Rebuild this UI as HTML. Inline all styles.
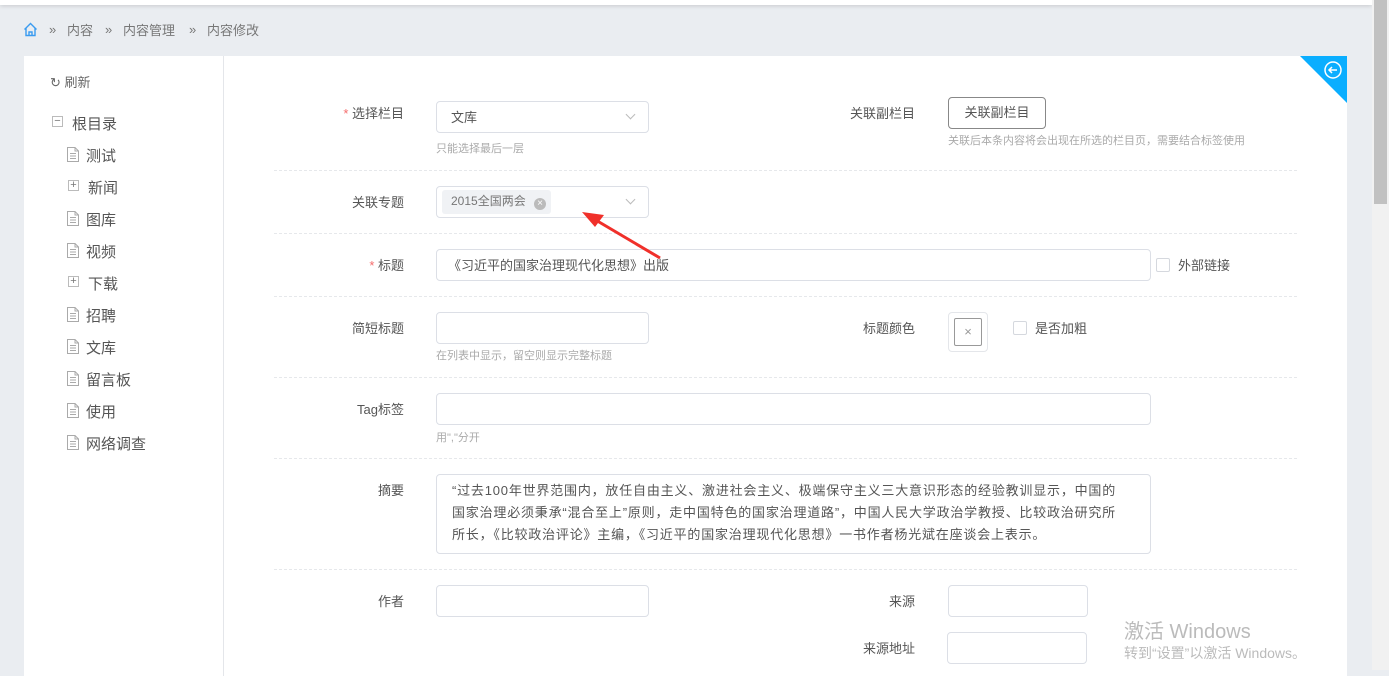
<!DOCTYPE html>
<html><head><meta charset="utf-8"><style>
*{margin:0;padding:0;box-sizing:border-box}
body{width:1389px;height:670px;overflow:hidden;background:#eaedf1;font-family:"Liberation Sans","Noto Sans CJK SC",sans-serif;color:#555;font-size:13px;position:relative}
.a{position:absolute;white-space:nowrap}
.top{left:0;top:0;width:1372px;height:5px;background:#fff;box-shadow:0 1px 4px rgba(0,0,0,.15)}
.sb{left:1372px;top:0;width:17px;height:670px;background:#f1f1f1}
.th{left:1374px;top:0;width:13px;height:204px;background:#c1c1c1}
.card{left:24px;top:56px;width:1323px;height:620px;background:#fff}
.side{left:223px;top:56px;width:1px;height:620px;background:#e4e6ea}
.bc{top:20px;font-size:13px;color:#777}
.tree{font-size:15px;color:#555}
.lbl{font-size:13px;color:#555;text-align:right;width:120px}
.in{border:1px solid #dcdfe6;border-radius:4px;background:#fff}
.help{font-size:11px;color:#aaa}
.sep{left:274px;width:1023px;height:0;border-top:1px dashed #e6e8eb}
.pl{width:11px;height:11px;border:1px solid #bbb;font-size:11px;line-height:9px;text-align:center;color:#777}
.cb{width:14px;height:14px;border:1px solid #d5d8de;border-radius:2px;background:#fff}
.req{color:#f56c6c}
.chev{width:7px;height:7px;border-right:1px solid #bbb;border-bottom:1px solid #bbb;transform:rotate(45deg)}
</style></head><body>
<svg width="0" height="0" style="position:absolute"><defs><symbol id="doc" viewBox="0 0 12 15"><path d="M0.5 0.5H8L11.5 4V14.5H0.5Z M8 0.5V4H11.5" fill="#fff" stroke="#aaa"/><path d="M3 6.5H9M3 9H9M3 11.5H9" stroke="#aaa"/></symbol></defs></svg>
<div class="a top"></div>
<div class="a sb"></div><div class="a th"></div>
<svg class="a" style="left:23px;top:22px" width="15" height="15" viewBox="0 0 15 15"><path d="M1.5 7.5 L7.5 1.5 L13.5 7.5 M3 6 V13.5 H12 V6 M6 13.5 V10 H9 V13.5" fill="none" stroke="#3a9bf0" stroke-width="1.4"/></svg>
<div class="a bc" style="left:49px;top:22px">»</div><div class="a bc" style="left:67px">内容</div>
<div class="a bc" style="left:105px;top:22px">»</div><div class="a bc" style="left:123px">内容管理</div>
<div class="a bc" style="left:189px;top:22px">»</div><div class="a bc" style="left:207px">内容修改</div>
<div class="a card"></div>
<div class="a side"></div>
<svg class="a" style="left:1300px;top:56px" width="47" height="47"><path d="M0 0H47V47Z" fill="#0aaeff"/><circle cx="33" cy="14" r="8" fill="none" stroke="#fff" stroke-width="1.5"/><path d="M37 14H29M32 11L29 14L32 17" fill="none" stroke="#fff" stroke-width="1.5"/></svg>
<div class="a" style="left:50px;top:72px;font-size:13px;color:#666">↻ 刷新</div>
<div class="a pl" style="left:52px;top:116px">−</div><div class="a tree" style="left:72px;top:113px">根目录</div>
<svg class="a" style="left:67px;top:147px" width="12" height="15"><use href="#doc"/></svg><div class="a tree" style="left:86px;top:145px">测试</div>
<div class="a pl" style="left:68px;top:180px">+</div><div class="a tree" style="left:88px;top:177px">新闻</div>
<svg class="a" style="left:67px;top:211px" width="12" height="15"><use href="#doc"/></svg><div class="a tree" style="left:86px;top:209px">图库</div>
<svg class="a" style="left:67px;top:243px" width="12" height="15"><use href="#doc"/></svg><div class="a tree" style="left:86px;top:241px">视频</div>
<div class="a pl" style="left:68px;top:276px">+</div><div class="a tree" style="left:88px;top:273px">下载</div>
<svg class="a" style="left:67px;top:307px" width="12" height="15"><use href="#doc"/></svg><div class="a tree" style="left:86px;top:305px">招聘</div>
<svg class="a" style="left:67px;top:339px" width="12" height="15"><use href="#doc"/></svg><div class="a tree" style="left:86px;top:337px">文库</div>
<svg class="a" style="left:67px;top:371px" width="12" height="15"><use href="#doc"/></svg><div class="a tree" style="left:86px;top:369px">留言板</div>
<svg class="a" style="left:67px;top:403px" width="12" height="15"><use href="#doc"/></svg><div class="a tree" style="left:86px;top:401px">使用</div>
<svg class="a" style="left:67px;top:435px" width="12" height="15"><use href="#doc"/></svg><div class="a tree" style="left:86px;top:433px">网络调查</div>

<div class="a lbl" style="left:284px;top:103px"><span class="req">* </span>选择栏目</div>
<div class="a in" style="left:436px;top:101px;width:213px;height:32px"></div>
<div class="a" style="left:451px;top:107px;font-size:13px;color:#555">文库</div>
<div class="a chev" style="left:627px;top:111px"></div>
<div class="a help" style="left:436px;top:140px">只能选择最后一层</div>
<div class="a lbl" style="left:795px;top:103px">关联副栏目</div>
<div class="a" style="left:948px;top:97px;width:98px;height:32px;border:1px solid #888;border-radius:4px;font-size:13px;text-align:center;line-height:30px;color:#555">关联副栏目</div>
<div class="a help" style="left:948px;top:132px">关联后本条内容将会出现在所选的栏目页，需要结合标签使用</div>
<div class="a sep" style="top:170px"></div>
<div class="a lbl" style="left:284px;top:192px">关联专题</div>
<div class="a in" style="left:436px;top:186px;width:213px;height:32px"></div>
<div class="a" style="left:442px;top:190px;width:109px;height:24px;background:#f0f2f5;border-radius:3px;font-size:12px;color:#777;line-height:23px;padding-left:9px">2015全国两会 <span style="display:inline-block;width:12px;height:12px;border-radius:6px;background:#bbb;color:#fff;font-size:10px;line-height:12px;text-align:center;margin-left:5px;vertical-align:-1px">×</span></div>
<div class="a chev" style="left:627px;top:196px"></div>
<div class="a sep" style="top:233px"></div>
<div class="a lbl" style="left:284px;top:255px"><span class="req">* </span>标题</div>
<div class="a in" style="left:436px;top:249px;width:715px;height:32px"></div>
<div class="a" style="left:448px;top:255px;font-size:13px;color:#555">《习近平的国家治理现代化思想》出版</div>
<div class="a cb" style="left:1156px;top:258px"></div>
<div class="a" style="left:1178px;top:255px;font-size:13px">外部链接</div>
<div class="a sep" style="top:296px"></div>
<svg class="a" style="left:570px;top:205px;z-index:5" width="95" height="60"><path d="M90 53 L24 14" stroke="#f0302a" stroke-width="3"/><path d="M12 7 L34 10 L25 22Z" fill="#f0302a"/></svg>
<div class="a lbl" style="left:284px;top:318px">简短标题</div>
<div class="a in" style="left:436px;top:312px;width:213px;height:32px"></div>
<div class="a help" style="left:436px;top:347px">在列表中显示，留空则显示完整标题</div>
<div class="a lbl" style="left:795px;top:318px">标题颜色</div>
<div class="a" style="left:948px;top:312px;width:40px;height:40px;border:1px solid #e4e6ea;border-radius:4px"></div>
<div class="a" style="left:954px;top:318px;width:28px;height:28px;border:1px solid #999;border-radius:2px;text-align:center;line-height:26px;color:#999;font-size:13px">×</div>
<div class="a cb" style="left:1013px;top:321px"></div>
<div class="a" style="left:1035px;top:318px;font-size:13px">是否加粗</div>
<div class="a sep" style="top:377px"></div>
<div class="a lbl" style="left:284px;top:399px">Tag标签</div>
<div class="a in" style="left:436px;top:393px;width:715px;height:32px"></div>
<div class="a help" style="left:436px;top:429px">用","分开</div>
<div class="a sep" style="top:458px"></div>
<div class="a lbl" style="left:284px;top:480px">摘要</div>
<div class="a in" style="left:436px;top:474px;width:715px;height:80px"></div>
<div class="a" style="left:452px;top:480px;font-size:13px;line-height:22px;color:#555;letter-spacing:0.8px">“过去100年世界范围内，放任自由主义、激进社会主义、极端保守主义三大意识形态的经验教训显示，中国的<br>国家治理必须秉承“混合至上”原则，走中国特色的国家治理道路”，中国人民大学政治学教授、比较政治研究所<br>所长，《比较政治评论》主编，《习近平的国家治理现代化思想》一书作者杨光斌在座谈会上表示。</div>
<div class="a sep" style="top:569px"></div>
<div class="a lbl" style="left:284px;top:591px">作者</div>
<div class="a in" style="left:436px;top:585px;width:213px;height:32px"></div>
<div class="a lbl" style="left:795px;top:591px">来源</div>
<div class="a in" style="left:948px;top:585px;width:140px;height:32px"></div>
<div class="a lbl" style="left:795px;top:638px">来源地址</div>
<div class="a in" style="left:947px;top:632px;width:140px;height:32px"></div>
<div class="a" style="left:1124px;top:615px;font-size:20px;color:#bbb">激活 Windows</div>
<div class="a" style="left:1124px;top:643px;font-size:14px;color:#bbb">转到“设置”以激活 Windows。</div>
</body></html>
